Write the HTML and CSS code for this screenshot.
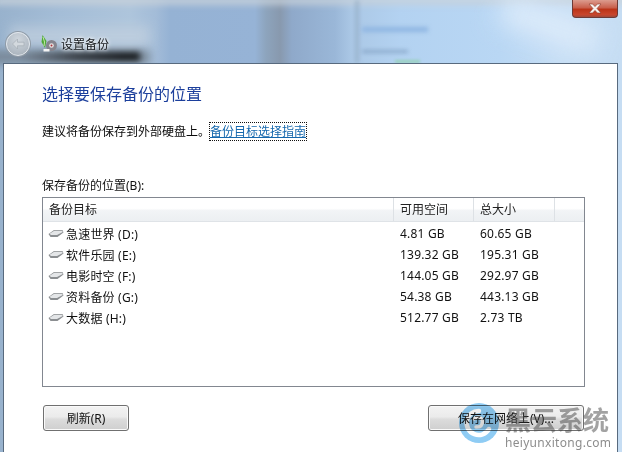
FILE: index.html
```html
<!DOCTYPE html>
<html lang="zh-CN">
<head>
<meta charset="utf-8">
<title>设置备份</title>
<link rel="stylesheet" href="styles.css">
</head>
<body>
<div class="window">
  <div class="streak streak-top"></div>
  <div class="streak streak-pale"></div>
  <div class="streak streak-band"></div>
  <div class="streak streak-dark"></div>
  <div class="streak streak-line"></div>
  <div class="streak streak-text1"></div>
  <div class="streak streak-text2"></div>
  <div class="streak streak-green"></div>
  <div class="streak streak-glow"></div>

  <div class="close">
    <svg width="16" height="11" viewBox="0 0 16 11"><path d="M2 1h3.600L8 3.600 10.400 1H14L10 5.500 14 10h-3.600L8 7.400 5.600 10H2l4-4.500z" fill="#f6f1ee" stroke="#8c3a2a" stroke-width=".6"/></svg>
  </div>

  <header class="nav">
    <div class="back">
      <svg width="14" height="12" viewBox="0 0 14 12"><path d="M6.500 1 1.500 6l5 5V7.800H13V4.200H6.500z" fill="#d3d9de" stroke="#a5adb4" stroke-width=".7"/></svg>
    </div>
    <svg class="nav-icon" width="18" height="18" viewBox="0 0 18 18">
      <path d="M2.500 0 6.500 6 5 13 1.500 7z" fill="#4fa838"/>
      <path d="M3 2 4.500 7 4 11" stroke="#c4eaa6" fill="none"/>
      <circle cx="11.500" cy="10.500" r="5.500" fill="#85858e"/>
      <circle cx="11.500" cy="10.500" r="2.300" fill="#e9e4e4"/>
      <circle cx="11.500" cy="10.500" r="1" fill="#a8323a"/>
      <path d="M3.500 14h6v2.500h-6z" fill="#f4f4f4"/>
    </svg>
    <span class="nav-title">设置备份</span>
  </header>

  <main class="panel">
    <h1 class="heading">选择要保存备份的位置</h1>
    <p class="advice">建议将备份保存到外部硬盘上。<a class="guide" href="#">备份目标选择指南</a></p>
    <label class="list-label">保存备份的位置(B):</label>
    <div class="list">
      <div class="list-head">
        <span class="col-name">备份目标</span>
        <span class="col-free">可用空间</span>
        <span class="col-total">总大小</span>
        <span class="col-rest"></span>
      </div>
      <div class="row">
        <span class="col-name"><svg class="disk" width="16" height="9" viewBox="0 0 16 9"><path d="M.5 5 6 1h8.500L15.500 3.500 9.500 8H2.500z" fill="#8b8e91"/><path d="M1.500 4.800 6.300 1.700h7.700L14.800 3 9 6H3z" fill="#e4e6e8"/></svg>急速世界 (D:)</span>
        <span class="col-free">4.81 GB</span>
        <span class="col-total">60.65 GB</span>
      </div>
      <div class="row">
        <span class="col-name"><svg class="disk" width="16" height="9" viewBox="0 0 16 9"><path d="M.5 5 6 1h8.500L15.500 3.500 9.500 8H2.500z" fill="#8b8e91"/><path d="M1.500 4.800 6.300 1.700h7.700L14.800 3 9 6H3z" fill="#e4e6e8"/></svg>软件乐园 (E:)</span>
        <span class="col-free">139.32 GB</span>
        <span class="col-total">195.31 GB</span>
      </div>
      <div class="row">
        <span class="col-name"><svg class="disk" width="16" height="9" viewBox="0 0 16 9"><path d="M.5 5 6 1h8.500L15.500 3.500 9.500 8H2.500z" fill="#8b8e91"/><path d="M1.500 4.800 6.300 1.700h7.700L14.800 3 9 6H3z" fill="#e4e6e8"/></svg>电影时空 (F:)</span>
        <span class="col-free">144.05 GB</span>
        <span class="col-total">292.97 GB</span>
      </div>
      <div class="row">
        <span class="col-name"><svg class="disk" width="16" height="9" viewBox="0 0 16 9"><path d="M.5 5 6 1h8.500L15.500 3.500 9.500 8H2.500z" fill="#8b8e91"/><path d="M1.500 4.800 6.300 1.700h7.700L14.800 3 9 6H3z" fill="#e4e6e8"/></svg>资料备份 (G:)</span>
        <span class="col-free">54.38 GB</span>
        <span class="col-total">443.13 GB</span>
      </div>
      <div class="row">
        <span class="col-name"><svg class="disk" width="16" height="9" viewBox="0 0 16 9"><path d="M.5 5 6 1h8.500L15.500 3.500 9.500 8H2.500z" fill="#8b8e91"/><path d="M1.500 4.800 6.300 1.700h7.700L14.800 3 9 6H3z" fill="#e4e6e8"/></svg>大数据 (H:)</span>
        <span class="col-free">512.77 GB</span>
        <span class="col-total">2.73 TB</span>
      </div>
    </div>
    <div class="actions">
      <button class="btn btn-refresh">刷新(R)</button>
      <button class="btn btn-save">保存在网络上(V)...</button>
    </div>
  </main>

  <div class="watermark">
    <svg class="wm-logo" width="40" height="40" viewBox="0 0 40 40">
      <circle cx="20" cy="20" r="20" fill="#8fccf4"/>
      <path d="M20 8a12 12 0 1 0 10 18" fill="none" stroke="#fff" stroke-width="4.500" stroke-linecap="round"/>
      <path d="M15 16c5-4 10 0 8 5-1 3-3 3-6 3" fill="none" stroke="#fff" stroke-width="3.500" stroke-linecap="round"/>
    </svg>
    <div class="wm-text">
      <div class="wm-name">黑云系统</div>
      <div class="wm-url">heiyunxitong.com</div>
    </div>
  </div>
</div>
</body>
</html>
```
FILE: styles.css
```css
* { box-sizing: border-box; }
html, body { margin: 0; padding: 0; }
body {
  width: 622px;
  height: 452px;
  overflow: hidden;
  font-family: "Noto Sans", "Noto Sans CJK SC", sans-serif;
  font-size: 12px;
  color: #111;
}
.window {
  position: relative;
  width: 622px;
  height: 452px;
  overflow: hidden;
  display: flex;
  flex-direction: column;
  padding: 0 4px 0 3px;
  background: linear-gradient(90deg,
    #98b2cd 0, #a4bdd7 60px, #aec5dc 130px, #a3bcd8 156px, #95b2d4 170px,
    #96b3d6 255px, #8da4bd 266px, #8899ae 280px, #8fa9ca 292px, #9ab7d8 335px,
    #abc8e6 352px, #b3d2f1 400px, #b9d7f4 500px, #c6def5 560px, #c6ddf3 622px);
}
.streak { position: absolute; pointer-events: none; }
.streak-top { left: -5px; top: -3px; width: 632px; height: 8px; background: #c9d2da; filter: blur(3px); opacity: .8; }
.streak-pale { left: 10px; top: 26px; width: 140px; height: 20px; background: #c3d1df; filter: blur(6px); opacity: .7; }
.streak-band { left: -10px; top: 50px; width: 160px; height: 14px; background: #6d7985; filter: blur(4px); opacity: .7; }
.streak-dark { left: 20px; top: 52px; width: 120px; height: 9px; background: linear-gradient(90deg, transparent, #3a4047 45%, #16191c 85%); filter: blur(3px); }
.streak-line { left: 355px; top: 0; width: 4px; height: 63px; background: #8ea6bd; filter: blur(2px); opacity: .6; }
.streak-text1 { left: 362px; top: 27px; width: 66px; height: 5px; background: #8fb6e2; filter: blur(2px); }
.streak-text2 { left: 362px; top: 50px; width: 46px; height: 3px; background: #7d9cbe; filter: blur(2px); opacity: .8; }
.streak-green { left: 395px; top: 60px; width: 25px; height: 3px; background: #96d0b8; filter: blur(1.500px); }
.streak-glow { left: 500px; top: 10px; width: 100px; height: 30px; background: #dcebfa; filter: blur(12px); transform: rotate(20deg); }

.close {
  position: absolute;
  left: 572px;
  top: 0;
  width: 46px;
  height: 18px;
  display: flex;
  align-items: center;
  justify-content: center;
  border: 1px solid #6d3a36;
  border-top: 0;
  border-radius: 0 0 4px 4px;
  background: linear-gradient(#dc9c8e 0, #c9604c 45%, #bb3418 55%, #c8452c 85%, #a04a3c 100%);
}

.nav {
  position: relative;
  height: 63px;
  flex: none;
  display: flex;
  align-items: center;
  padding: 25px 0 0 3px;
}
.back {
  width: 24px;
  height: 24px;
  border-radius: 50%;
  display: flex;
  align-items: center;
  justify-content: center;
  border: 1px solid #e4e8ec;
  box-shadow: 0 0 0 1px #8f9aa5;
  background: radial-gradient(circle at 50% 30%, #cfd6dd 0, #b5bec7 60%, #a3adb7 100%);
}
.nav-icon { margin-left: 10px; }
.nav-title { margin-left: 3px; font-size: 12px; color: #14171a; text-shadow: 0 0 5px #fff, 0 0 3px #fff; }

.panel {
  position: relative;
  flex: 1;
  background: #fff;
  border: 1px solid #586a7e;
  border-bottom: 0;
  padding: 19px 33px 0 38px;
  display: flex;
  flex-direction: column;
}
.heading {
  margin: 0;
  font-size: 16px;
  line-height: 22px;
  font-weight: 400;
  color: #1c3f9c;
}
.advice {
  margin: 18px 0 0;
  line-height: 18px;
  color: #0a0a0a;
}
.guide {
  color: #1467ad;
  text-decoration: underline;
  outline: 1px dotted #111;
  outline-offset: 0;
}
.list-label {
  display: block;
  margin-top: 37px;
  line-height: 16px;
}
.list {
  width: 543px;
  height: 190px;
  flex: none;
  margin-top: 3px;
  border: 1px solid #828790;
  background: #fff;
}
.list-head, .row {
  display: grid;
  grid-template-columns: 351px 80px 81px 1fr;
  align-items: center;
}
.list-head {
  height: 24px;
  background: linear-gradient(#fff 0, #fff 45%, #f2f4f6 55%, #eceff2 100%);
  border-bottom: 1px solid #dfe3e7;
  color: #222;
  margin-bottom: 1px;
}
.list-head span { height: 23px; line-height: 23px; padding-left: 6px; border-right: 1px solid #dde1e5; }
.list-head .col-rest { border-right: 0; }
.row { height: 21px; letter-spacing: .2px; }
.row .col-name { display: flex; align-items: center; padding-left: 5px; gap: 2px; }
.row .col-free, .row .col-total { padding-left: 6px; }
.disk { flex: none; }

.actions {
  display: flex;
  justify-content: space-between;
  margin-top: 18px;
  padding: 0 0 0 1px;
  width: 542px;
}
.btn {
  height: 26px;
  font: inherit;
  color: #111;
  padding: 0;
  border: 1px solid #707070;
  border-radius: 3px;
  background: linear-gradient(#f3f3f3 0, #ebebeb 45%, #dcdcdc 55%, #cfcfcf 100%);
  box-shadow: inset 0 0 0 1px #fafafa;
}
.btn-refresh { width: 86px; }
.btn-save { width: 156px; }

.watermark {
  position: absolute;
  left: 459px;
  top: 404px;
  display: flex;
  gap: 6px;
}
.wm-logo { mix-blend-mode: multiply; margin-top: -1px; }
.wm-text { display: flex; flex-direction: column; }
.wm-name {
  font-family: "Noto Sans CJK SC", sans-serif;
  font-size: 26px;
  line-height: 30px;
  font-weight: 700;
  color: rgba(70, 70, 70, .5);
}
.wm-url {
  margin-top: 2px;
  font-family: "Noto Sans", sans-serif;
  font-size: 12px;
  line-height: 14px;
  letter-spacing: .3px;
  color: #8d8d8d;
}
```
